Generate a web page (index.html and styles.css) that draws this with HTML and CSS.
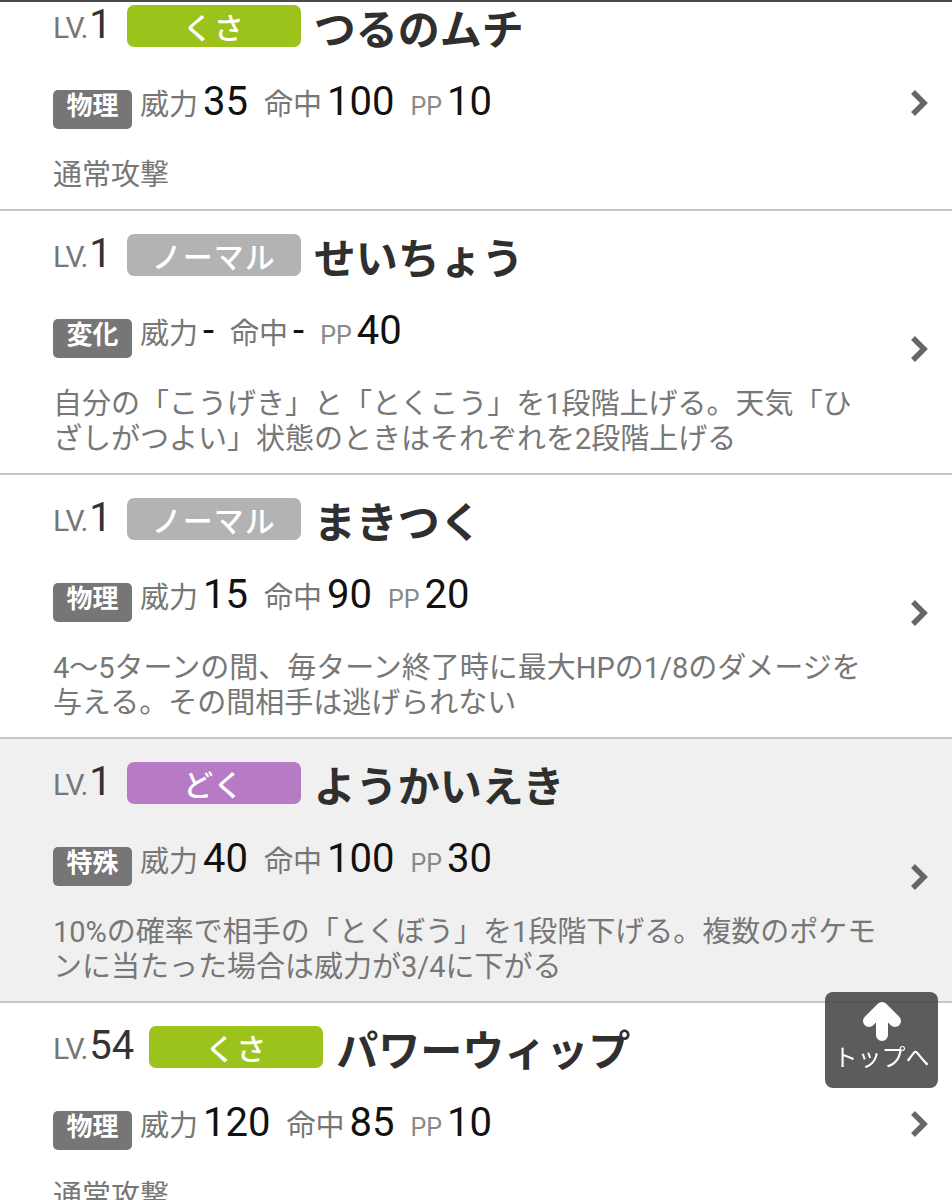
FILE: index.html
```html
<!DOCTYPE html>
<html lang="ja">
<head>
    <meta charset="UTF-8">
    <meta name="viewport" content="width=device-width, initial-scale=1.0">
    <title>わざ一覧</title>
    <link rel="stylesheet" href="styles.css">
</head>
<body>
    <div class="move-list">
        <div class="move">
            <div class="move-body">
                <div class="move-head">
                    <span class="lv">LV.<span class="lv-num">1</span></span>
                    <span class="type grass">くさ</span>
                    <span class="move-name">つるのムチ</span>
                </div>
                <div class="move-stats">
                    <span class="cat">物理</span>
                    <span class="label">威力</span><span class="num">35</span>
                    <span class="label">命中</span><span class="num">100</span>
                    <span class="label pp">PP</span><span class="num">10</span>
                </div>
                <p class="move-desc">通常攻撃</p>
            </div>
            <svg class="chevron" viewBox="0 0 18 28"><polyline points="3,3 14,14 3,25"/></svg>
        </div>

        <div class="move">
            <div class="move-body">
                <div class="move-head">
                    <span class="lv">LV.<span class="lv-num">1</span></span>
                    <span class="type normal">ノーマル</span>
                    <span class="move-name">せいちょう</span>
                </div>
                <div class="move-stats">
                    <span class="cat">変化</span>
                    <span class="label">威力</span><span class="num">-</span>
                    <span class="label">命中</span><span class="num">-</span>
                    <span class="label pp">PP</span><span class="num">40</span>
                </div>
                <p class="move-desc">自分の「こうげき」と「とくこう」を1段階上げる。天気「ひざしがつよい」状態のときはそれぞれを2段階上げる</p>
            </div>
            <svg class="chevron" viewBox="0 0 18 28"><polyline points="3,3 14,14 3,25"/></svg>
        </div>

        <div class="move">
            <div class="move-body">
                <div class="move-head">
                    <span class="lv">LV.<span class="lv-num">1</span></span>
                    <span class="type normal">ノーマル</span>
                    <span class="move-name">まきつく</span>
                </div>
                <div class="move-stats">
                    <span class="cat">物理</span>
                    <span class="label">威力</span><span class="num">15</span>
                    <span class="label">命中</span><span class="num">90</span>
                    <span class="label pp">PP</span><span class="num">20</span>
                </div>
                <p class="move-desc">4〜5ターンの間、毎ターン終了時に最大HPの1/8のダメージを与える。その間相手は逃げられない</p>
            </div>
            <svg class="chevron" viewBox="0 0 18 28"><polyline points="3,3 14,14 3,25"/></svg>
        </div>

        <div class="move active">
            <div class="move-body">
                <div class="move-head">
                    <span class="lv">LV.<span class="lv-num">1</span></span>
                    <span class="type poison">どく</span>
                    <span class="move-name">ようかいえき</span>
                </div>
                <div class="move-stats">
                    <span class="cat">特殊</span>
                    <span class="label">威力</span><span class="num">40</span>
                    <span class="label">命中</span><span class="num">100</span>
                    <span class="label pp">PP</span><span class="num">30</span>
                </div>
                <p class="move-desc">10%の確率で相手の「とくぼう」を1段階下げる。複数のポケモンに当たった場合は威力が3/4に下がる</p>
            </div>
            <svg class="chevron" viewBox="0 0 18 28"><polyline points="3,3 14,14 3,25"/></svg>
        </div>

        <div class="move">
            <div class="move-body">
                <div class="move-head">
                    <span class="lv">LV.<span class="lv-num">54</span></span>
                    <span class="type grass">くさ</span>
                    <span class="move-name">パワーウィップ</span>
                </div>
                <div class="move-stats">
                    <span class="cat">物理</span>
                    <span class="label">威力</span><span class="num">120</span>
                    <span class="label">命中</span><span class="num">85</span>
                    <span class="label pp">PP</span><span class="num">10</span>
                </div>
                <p class="move-desc">通常攻撃</p>
            </div>
            <svg class="chevron" viewBox="0 0 18 28"><polyline points="3,3 14,14 3,25"/></svg>
        </div>
    </div>

    <a class="to-top" href="#">
        <svg class="to-top-arrow" viewBox="0 0 42 40"><path d="M21 34 V8 M8 20 L21 7 L34 20"/></svg>
        <span>トップへ</span>
    </a>
</body>
</html>
```

FILE: styles.css
```css
body {
    margin: 0;
    background: #fff;
    font-family: Roboto, "Noto Sans CJK JP", sans-serif;
    color: #333;
}

.move-list {
    border-top: 2px solid #4a4a4a;
    overflow: hidden;
}

.move {
    display: flex;
    align-items: center;
    padding: 20px 24px 16px 53px;
    border-bottom: 2px solid #c6c6c6;
}

.move:first-child {
    margin-top: -20px;
}

.move.active {
    background: #f0f0f0;
}

.move-body {
    width: 826px;
}

.move-head {
    display: flex;
    align-items: center;
    height: 48px;
}

.lv {
    font-size: 30px;
    line-height: 48px;
    color: #777;
    letter-spacing: -1px;
}

.lv-num {
    font-size: 40px;
    color: #333;
    letter-spacing: 0;
    margin-left: 2px;
}

.type {
    width: 174px;
    height: 42px;
    margin-left: 15px;
    border-radius: 7px;
    display: flex;
    justify-content: center;
    align-items: center;
    color: #fff;
    font-size: 30px;
    font-weight: 500;
    letter-spacing: 1px;
}

.type.grass {
    background: #9bc31c;
}

.type.normal {
    background: #b3b3b3;
}

.type.poison {
    background: #b77bc6;
}

.move-name {
    margin-left: 13px;
    font-size: 42px;
    font-weight: bold;
    color: #2f2f2f;
}

.move-stats {
    display: flex;
    align-items: baseline;
    margin-top: 28px;
}

.cat {
    width: 79px;
    height: 39px;
    border-radius: 5px;
    background: #767676;
    color: #fff;
    font-size: 26px;
    line-height: 32px;
    font-weight: bold;
    text-align: center;
}

.label {
    font-size: 29px;
    color: #777;
    margin-left: 16px;
}

.cat + .label {
    margin-left: 8px;
}

.label.pp {
    font-size: 25px;
    color: #888;
}

.num {
    font-size: 40px;
    color: #111;
    margin-left: 5px;
}

.move-desc {
    margin: 29px 0 0;
    font-size: 29px;
    line-height: 35px;
    color: #777;
}

.chevron {
    width: 18px;
    height: 28px;
    margin-left: auto;
    margin-top: 10px;
    flex-shrink: 0;
}

.chevron polyline {
    fill: none;
    stroke: #666;
    stroke-width: 5.5;
}

.to-top {
    position: fixed;
    right: 14px;
    bottom: 112px;
    width: 113px;
    height: 96px;
    border-radius: 8px;
    background: rgba(70, 70, 70, 0.88);
    color: #fff;
    text-decoration: none;
    display: flex;
    flex-direction: column;
    align-items: center;
}

.to-top-arrow {
    width: 42px;
    height: 40px;
    margin-top: 9px;
}

.to-top-arrow path {
    fill: none;
    stroke: #fff;
    stroke-width: 12;
    stroke-linecap: round;
    stroke-linejoin: round;
}

.to-top span {
    font-size: 24px;
    line-height: 30px;
    margin-top: 2px;
}
```
